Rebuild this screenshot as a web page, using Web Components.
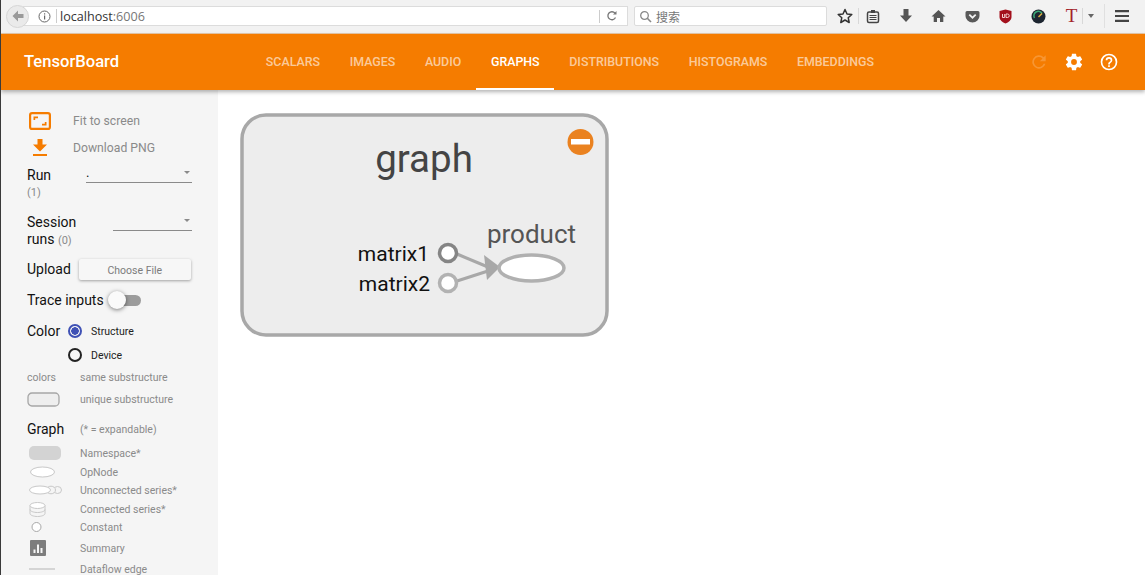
<!DOCTYPE html>
<html>
<head>
<meta charset="utf-8">
<style>
  html, body { margin: 0; height: 100%; overflow: hidden; background: #fff; font-family: Roboto, sans-serif; }
  body { display: flex; flex-direction: column; height: 575px; border-left: 1px solid #3a3a3a; box-sizing: border-box; }
  .page { flex: 1; display: flex; min-height: 0; }
</style>
</head>
<body>
<browser-bar></browser-bar>
<app-header>
  <nav-tab>SCALARS</nav-tab>
  <nav-tab>IMAGES</nav-tab>
  <nav-tab>AUDIO</nav-tab>
  <nav-tab active>GRAPHS</nav-tab>
  <nav-tab>DISTRIBUTIONS</nav-tab>
  <nav-tab>HISTOGRAMS</nav-tab>
  <nav-tab>EMBEDDINGS</nav-tab>
</app-header>
<div class="page">
  <side-panel></side-panel>
  <graph-scene></graph-scene>
</div>

<script>
const browserTemplate = document.createElement('template');
browserTemplate.innerHTML = `
  <style>
    :host { display: flex; align-items: center; height: 34px; box-sizing: border-box; background: #f2f2f2; border-bottom: 1px solid #e8c9a8; padding: 0 0 1px 5px; font-family: "Open Sans", sans-serif; }
    .back { width: 23px; height: 23px; border-radius: 50%; background: #eaeaea; border: 1px solid #d6d6d6; box-sizing: border-box; display: flex; align-items: center; justify-content: center; margin-right: -6px; position: relative; z-index: 1; }
    .url { width: 605px; height: 20px; box-sizing: border-box; background: #fff; border: 1px solid #dcdcdc; display: flex; align-items: center; padding-left: 14px; font-size: 12.600px; color: #333; }
    .url .sep { width: 1px; height: 14px; background: #ccc; margin: 0 3px 0 5px; }
    .url .port { color: #777; }
    .url .end { margin-left: auto; display: flex; align-items: center; }
    .url .end .sep { margin: 0 6px 0 0; }
    .search { width: 193px; height: 20px; box-sizing: border-box; margin-left: 6px; background: #fff; border: 1px solid #dcdcdc; border-radius: 2px; display: flex; align-items: center; gap: 4px; padding-left: 4px; font: 12px "Noto Sans CJK SC", sans-serif; color: #777; }
    .tools { display: flex; align-items: center; margin-left: 9px; }
    .tools svg { display: block; }
    .slot { width: 33.300px; display: flex; justify-content: center; }
    .star { width: 18px; display: flex; justify-content: center; border-right: 1px solid #d8d8d8; padding-right: 4px; margin-right: 4px; }
    .t { font: 19px "Liberation Serif", serif; color: #a3232b; width: 14px; text-align: center; line-height: 20px; margin-left: 9px; }
    .caret { border-left: 1px solid #d8d8d8; height: 16px; margin-left: 4px; padding-left: 5px; display: flex; align-items: center; }
    .menu { border-left: 1px solid #e0e0e0; height: 24px; margin-left: 10px; padding-left: 10px; display: flex; align-items: center; }
  </style>
  <div class="back">
    <svg width="14" height="14" viewBox="0 0 14 14"><path d="M7 1.500 1.500 7 7 12.500V9h5.500V5H7z" fill="#9a9a9a"/></svg>
  </div>
  <div class="url">
    <svg width="13" height="13" viewBox="0 0 13 13"><circle cx="6.500" cy="6.500" r="5.500" fill="none" stroke="#666" stroke-width="1"/><rect x="6" y="5.500" width="1.200" height="4" fill="#666"/><rect x="6" y="3.300" width="1.200" height="1.200" fill="#666"/></svg>
    <span class="sep"></span>
    <span>localhost<span class="port">:6006</span></span>
    <span class="end">
      <span class="sep" style="height:13px"></span>
      <svg width="12" height="12" viewBox="0 0 12 12" style="margin-right:9px"><path d="M9.500 7.500A4 4 0 1 1 9 3.200" fill="none" stroke="#777" stroke-width="1.300"/><path d="M10.500 1v3.500H7z" fill="#777"/></svg>
    </span>
  </div>
  <div class="search">
    <svg width="13" height="13" viewBox="0 0 13 13"><circle cx="5.500" cy="5.500" r="3.800" fill="none" stroke="#888" stroke-width="1.300"/><path d="M8.300 8.300 12 12" stroke="#888" stroke-width="1.600"/></svg>
    <span>搜索</span>
  </div>
  <div class="tools">
    <div class="star"><svg width="16" height="16" viewBox="0 0 16 16"><path d="M8 1.500 10 6l4.800.5-3.600 3.200 1 4.800L8 12l-4.200 2.500 1-4.800L1.200 6.500 6 6z" fill="none" stroke="#333" stroke-width="1.500" stroke-linejoin="round"/></svg></div>
    <div class="slot" style="width:20px"><svg width="14" height="15" viewBox="0 0 14 15"><rect x="1.500" y="3" width="11" height="10.500" rx="1.500" fill="none" stroke="#444" stroke-width="1.500"/><rect x="5" y="1" width="4" height="3" fill="#444"/><path d="M3.500 6.500h7M3.500 8.500h7M3.500 10.500h7" stroke="#444" stroke-width="1"/></svg></div>
    <div class="slot" style="margin-left:6px"><svg width="14" height="16" viewBox="0 0 14 16"><path d="M4.500 1h5v6.500H13L7 14 1 7.500h3.500z" fill="#555"/></svg></div>
    <div class="slot"><svg width="15" height="14" viewBox="0 0 15 14"><path d="M7.500 1 0.500 7.500h2.200V13h3.300V9h3v4h3.300V7.500h2.200z" fill="#555"/></svg></div>
    <div class="slot"><svg width="15" height="13" viewBox="0 0 15 13"><path d="M2 1h11a1.500 1.500 0 0 1 1.500 1.500V6A7 6.500 0 0 1 .5 6V2.500A1.500 1.500 0 0 1 2 1z" fill="#595959"/><path d="M4.300 4.700 7.500 7.700l3.200-3" fill="none" stroke="#f2f2f2" stroke-width="1.800"/></svg></div>
    <div class="slot"><svg width="13" height="15" viewBox="0 0 13 15"><path d="M.5 2 6.500 .5 12.500 2v6c0 3-3 5.500-6 6.500C3.500 13.500 .5 11 .5 8z" fill="#a3101c"/><path d="M3.500 5v3.500h2.200V5M7 5v3.500h1.500a1.700 1.700 0 0 0 0-3.500z" fill="none" stroke="#f4d0d0" stroke-width="1"/></svg></div>
    <div class="slot"><svg width="15" height="15" viewBox="0 0 15 15"><circle cx="7.500" cy="7.500" r="7" fill="#1d2530"/><path d="M3.500 9A4.300 4.300 0 0 1 11 4.500" fill="none" stroke="#3aa776" stroke-width="1.500"/><path d="M7.500 8 11 4.500" stroke="#e0b040" stroke-width="1.400"/></svg></div>
    <span class="t">T</span>
    <div class="caret"><svg width="6" height="4" viewBox="0 0 6 4"><path d="M0 0h6L3 4z" fill="#666"/></svg></div>
    <div class="menu"><svg width="14" height="12" viewBox="0 0 14 12"><path d="M0 1.200h14M0 6h14M0 10.800h14" stroke="#444" stroke-width="2.200"/></svg></div>
  </div>
`;
class BrowserBar extends HTMLElement {
  connectedCallback() {
    this.attachShadow({ mode: 'open' }).appendChild(browserTemplate.content.cloneNode(true));
  }
}
customElements.define('browser-bar', BrowserBar);

const headerTemplate = document.createElement('template');
headerTemplate.innerHTML = `
  <style>
    :host { display: flex; align-items: stretch; height: 56px; flex: none; background: #f57c00; color: #fff; padding-left: 23px; box-shadow: 0 2px 4px rgba(0,0,0,.3); position: relative; z-index: 2; font-family: Roboto, sans-serif; }
    .title { font-size: 16.600px; font-weight: 500; width: 227px; line-height: 56px; }
    .tabs { display: flex; }
    .actions { margin-left: auto; display: flex; align-items: center; gap: 15px; padding: 0 26px 0 0; }
    svg { display: block; }
  </style>
  <div class="title">TensorBoard</div>
  <div class="tabs"><slot></slot></div>
  <div class="actions">
    <svg width="20" height="20" viewBox="0 0 24 24" style="opacity:.2"><path d="M17.650 6.350A8 8 0 1 0 19.700 14h-2.100a6 6 0 1 1-1.400-6.200L13 11h7V4z" fill="#fff"/></svg>
    <svg width="20" height="20" viewBox="0 0 24 24"><path d="M19.430 12.980c.04-.32.07-.64.07-.98s-.03-.66-.07-.98l2.110-1.650c.19-.15.24-.42.12-.64l-2-3.460c-.12-.22-.39-.3-.61-.22l-2.490 1c-.52-.4-1.080-.73-1.690-.98l-.38-2.650A.49.49 0 0 0 14 2h-4c-.25 0-.46.18-.49.420l-.38 2.650c-.61.250-1.170.590-1.690.980l-2.490-1a.49.49 0 0 0-.61.220l-2 3.460c-.130.220-.070.490.120.640l2.110 1.650c-.04.320-.07.650-.07.980s.03.660.07.980l-2.110 1.650c-.19.150-.24.420-.12.640l2 3.460c.12.220.39.300.61.220l2.490-1c.52.400 1.080.730 1.690.980l.38 2.650c.03.240.24.420.49.420h4c.25 0 .46-.18.49-.42l.38-2.650c.61-.25 1.170-.59 1.690-.98l2.490 1c.23.090.49 0 .61-.22l2-3.460c.12-.22.07-.49-.12-.64zM12 15.500a3.500 3.500 0 1 1 0-7 3.500 3.500 0 0 1 0 7z" fill="#fff"/></svg>
    <svg width="20" height="20" viewBox="0 0 24 24"><path d="M11 18h2v-2h-2zm1-16a10 10 0 1 0 0 20 10 10 0 0 0 0-20zm0 18a8 8 0 1 1 0-16 8 8 0 0 1 0 16zm0-14a4 4 0 0 0-4 4h2a2 2 0 0 1 4 0c0 2-3 1.750-3 5h2c0-2.250 3-2.500 3-5a4 4 0 0 0-4-4z" fill="#fff"/></svg>
  </div>
`;
class AppHeader extends HTMLElement {
  connectedCallback() {
    this.attachShadow({ mode: 'open' }).appendChild(headerTemplate.content.cloneNode(true));
  }
}
customElements.define('app-header', AppHeader);

const tabTemplate = document.createElement('template');
tabTemplate.innerHTML = `
  <style>
    :host { display: flex; align-items: center; height: 56px; box-sizing: border-box; padding: 0 14.850px 1px 14.850px; font: 500 12.400px Roboto, sans-serif; color: rgba(255,255,255,.62); }
    :host([active]) { color: #fff; box-shadow: inset 0 -2px #fff; }
  </style>
  <slot></slot>
`;
class NavTab extends HTMLElement {
  connectedCallback() {
    this.attachShadow({ mode: 'open' }).appendChild(tabTemplate.content.cloneNode(true));
  }
}
customElements.define('nav-tab', NavTab);

const legendTemplate = document.createElement('template');
legendTemplate.innerHTML = `
  <style>
    :host { display: flex; align-items: center; height: var(--h, 18px); font: 10.500px Roboto, sans-serif; color: #8a8a8a; }
    .key { width: 53px; flex: none; display: flex; align-items: center; }
  </style>
  <div class="key"><slot name="key"></slot></div>
  <slot></slot>
`;
class LegendRow extends HTMLElement {
  connectedCallback() {
    this.attachShadow({ mode: 'open' }).appendChild(legendTemplate.content.cloneNode(true));
  }
}
customElements.define('legend-row', LegendRow);

const panelTemplate = document.createElement('template');
panelTemplate.innerHTML = `
  <style>
    :host { display: block; width: 217px; flex: none; box-sizing: border-box; background: #f5f5f5; padding: 17px 26px 0 26px; font: 14px Roboto, sans-serif; color: #111; overflow: hidden; }
    svg { display: block; }
    .act { display: flex; align-items: center; height: 27px; font-size: 12.200px; color: #8a8a8a; }
    .act .ic { width: 46px; display: flex; flex: none; }
    .sel { flex: 1; border-bottom: 1px solid #8a8a8a; height: 15px; display: flex; justify-content: space-between; font-size: 13px; line-height: 10px; }
    .sel i { width: 0; height: 0; border: 3px solid transparent; border-top: 3px solid #8a8a8a; margin: 4px 2px 0 0; }
    .row { display: flex; }
    .sub { font-size: 11px; color: #8a8a8a; }
    .btn { width: 112px; height: 21px; margin-left: 8px; background: #f7f7f7; border-radius: 2px; box-shadow: 0 1px 3px rgba(0,0,0,.35); font-size: 10.500px; color: #7c7c7c; text-align: center; line-height: 23px; }
    .track { width: 22px; height: 11px; background: #9c9c9c; border-radius: 6px; margin-left: 15px; position: relative; }
    .thumb { position: absolute; left: -11px; top: -3.500px; width: 18px; height: 18px; border-radius: 50%; background: #fafafa; box-shadow: 0 1px 4px rgba(0,0,0,.5); }
    .radio { width: 14px; height: 14px; box-sizing: border-box; border: 2px solid #222; border-radius: 50%; margin-right: 9px; flex: none; }
    .radio.on { border-color: #3f51b5; background: radial-gradient(circle, #3f51b5 0 3.500px, transparent 4px); }
    .rlabel { font-size: 10.500px; color: #222; }
  </style>
  <div class="act"><span class="ic"><svg width="22" height="18" viewBox="0 0 22 18" style="margin-left:2px"><rect x="1.100" y="1.100" width="19.800" height="15.800" rx="2" fill="none" stroke="#f57c00" stroke-width="2.200"/><path d="M4.500 8V4.500H9V6.200H6.200V8zM17.500 10v3.500H13v-1.700h2.800V10z" fill="#f57c00"/></svg></span>Fit to screen</div>
  <div class="act"><span class="ic"><svg width="14" height="17" viewBox="0 0 14 17" style="margin-left:6px"><path d="M4.500 0h5v5.500H14L7 12.500 0 5.500h4.500z" fill="#f57c00"/><rect x="0" y="15" width="14" height="2" fill="#f57c00"/></svg></span>Download PNG</div>

  <div class="row" style="align-items:flex-end;margin-top:6px"><span style="width:59px;line-height:16px">Run</span><span class="sel"><span style="margin-top:1px">.</span><i></i></span></div>
  <div class="sub" style="margin-top:3px;height:28px">(1)</div>

  <div class="row" style="height:38px">
    <span style="width:86px;line-height:17px">Session<br>runs <span class="sub">(0)</span></span>
    <span class="sel" style="margin-top:1px"><span></span><i></i></span>
  </div>

  <div class="row" style="align-items:center;margin-top:6px;height:22px">Upload<span class="btn">Choose File</span></div>
  <div class="row" style="align-items:center;margin-top:9px;height:22px">Trace inputs<span class="track"><span class="thumb"></span></span></div>

  <div class="row" style="align-items:center;margin-top:8px;height:24px">
    <span style="width:41px">Color</span><span class="radio on"></span><span class="rlabel">Structure</span>
  </div>
  <div class="row" style="align-items:center;height:24px;padding-left:41px"><span class="radio"></span><span class="rlabel">Device</span></div>

  <legend-row style="--h:22px;margin-top:-1px">
    <span slot="key">colors</span>same substructure
  </legend-row>
  <legend-row style="--h:22px">
    <svg slot="key" width="33" height="15" viewBox="0 0 33 15"><rect x="1" y="1" width="31" height="13" rx="4" fill="#eee" stroke="#a6a6a6" stroke-width="1.300"/></svg>unique substructure
  </legend-row>

  <legend-row style="--h:22px;margin-top:8px">
    <span slot="key" style="font-size:14px;color:#111">Graph</span>(* = expandable)
  </legend-row>
  <legend-row style="--h:20px;margin-top:3px">
    <svg slot="key" width="34" height="14" viewBox="0 0 34 14"><rect x="2" y="0" width="32" height="14" rx="5" fill="#d3d3d3"/></svg>Namespace*
  </legend-row>
  <legend-row>
    <svg slot="key" width="34" height="12" viewBox="0 0 34 12"><ellipse cx="15.500" cy="6" rx="12" ry="5" fill="#fff" stroke="#c8c8c8"/></svg>OpNode
  </legend-row>
  <legend-row>
    <svg slot="key" width="36" height="10" viewBox="0 0 36 10"><ellipse cx="30.500" cy="5" rx="4" ry="3.500" fill="#f5f5f5" stroke="#c8c8c8"/><ellipse cx="24" cy="5" rx="4.500" ry="3.800" fill="#f5f5f5" stroke="#c8c8c8"/><ellipse cx="13" cy="5" rx="10.500" ry="4" fill="#fff" stroke="#c8c8c8"/></svg>Unconnected series*
  </legend-row>
  <legend-row style="--h:19px;margin-top:1px">
    <svg slot="key" width="34" height="15" viewBox="0 0 34 15"><path d="M3 3.500v8c0 1.700 3.500 3 7.500 3s7.500-1.300 7.500-3v-8" fill="#f5f5f5" stroke="#c8c8c8"/><path d="M3 7.500c0 1.700 3.500 3 7.500 3s7.500-1.300 7.500-3" fill="none" stroke="#c8c8c8"/><ellipse cx="10.500" cy="3.500" rx="7.500" ry="3" fill="#fff" stroke="#c8c8c8"/></svg>Connected series*
  </legend-row>
  <legend-row style="margin-top:-1px">
    <svg slot="key" width="34" height="12" viewBox="0 0 34 12"><circle cx="9.500" cy="6" r="4.500" fill="#fff" stroke="#a8a8a8"/></svg>Constant
  </legend-row>
  <legend-row style="--h:22px;margin-top:1px">
    <svg slot="key" width="34" height="16" viewBox="0 0 34 16"><rect x="3" y="0" width="16" height="16" rx="1" fill="#7d7d7d"/><path d="M6.500 9.500h2v3.500h-2zM10 4.500h2v8.500h-2zM13.500 8h2v5h-2z" fill="#f5f5f5"/></svg>Summary
  </legend-row>
  <legend-row style="--h:20px">
    <svg slot="key" width="34" height="4" viewBox="0 0 34 4"><path d="M2 2h26" stroke="#b5b5b5"/></svg>Dataflow edge
  </legend-row>
`;
class SidePanel extends HTMLElement {
  connectedCallback() {
    this.attachShadow({ mode: 'open' }).appendChild(panelTemplate.content.cloneNode(true));
  }
}
customElements.define('side-panel', SidePanel);

const sceneTemplate = document.createElement('template');
sceneTemplate.innerHTML = `
  <style>
    :host { display: block; flex: 1; min-width: 0; background: #fff; overflow: hidden; }
    svg { display: block; font-family: Roboto, sans-serif; }
  </style>
  <svg width="927" height="485" viewBox="218 90 927 485">
    <rect x="242" y="115" width="365" height="220" rx="24" fill="#ededed" stroke="#a8a8a8" stroke-width="3.500"/>
    <circle cx="580.500" cy="142" r="13" fill="#ea8220"/>
    <rect x="571" y="139" width="19" height="5.500" fill="#fff"/>
    <text x="424" y="172" text-anchor="middle" font-size="38.500" fill="#444">graph</text>
    <text x="531.500" y="243" text-anchor="middle" font-size="26" fill="#555">product</text>
    <text x="429" y="261" text-anchor="end" font-size="21" fill="#111">matrix1</text>
    <text x="430" y="291" text-anchor="end" font-size="21" fill="#111">matrix2</text>
    <path d="M457 254 488 267" stroke="#a8a8a8" stroke-width="3"/>
    <path d="M457 281 488 271" stroke="#a8a8a8" stroke-width="3"/>
    <path d="M484 255 500 267 487 280 z" fill="#a8a8a8"/>
    <circle cx="448" cy="253" r="8.500" fill="#fff" stroke="#858585" stroke-width="3.500"/>
    <circle cx="448" cy="283" r="8.500" fill="#fff" stroke="#b2b2b2" stroke-width="3.500"/>
    <ellipse cx="531.500" cy="268" rx="32.500" ry="13" fill="#fff" stroke="#b0b0b0" stroke-width="3.500"/>
  </svg>
`;
class GraphScene extends HTMLElement {
  connectedCallback() {
    this.attachShadow({ mode: 'open' }).appendChild(sceneTemplate.content.cloneNode(true));
  }
}
customElements.define('graph-scene', GraphScene);
</script>
</body>
</html>
